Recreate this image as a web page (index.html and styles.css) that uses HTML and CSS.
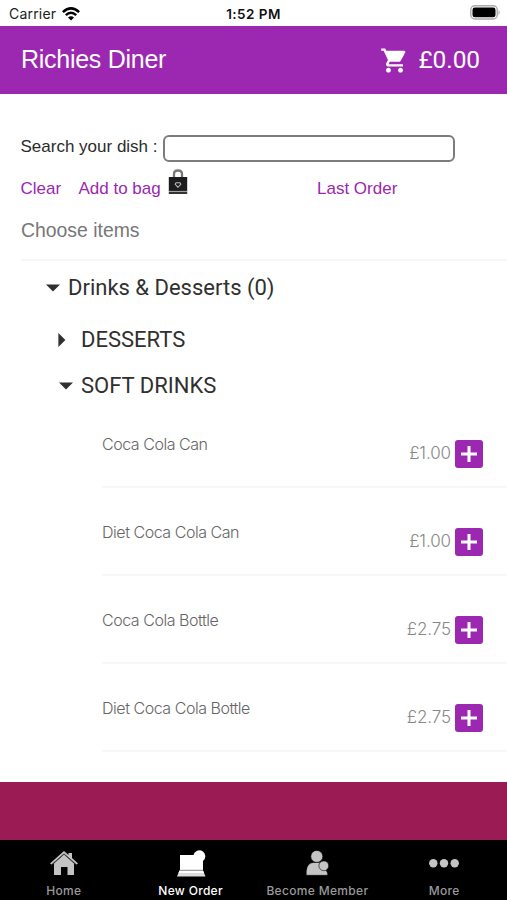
FILE: index.html
```html
<!DOCTYPE html>
<html lang="en">
<head>
<meta charset="utf-8">
<title>Richies Diner</title>
<link rel="stylesheet" href="styles.css">
</head>
<body>
<div class="status">
  <div class="carrier"><span>Carrier</span>
    <svg width="18" height="14" viewBox="0 0 18 14"><g fill="none" stroke="#000" stroke-width="2.5"><path d="M.9 5.1Q9-2.3 17.1 5.1"/><path d="M3.8 8.1Q9 3.3 14.2 8.1"/></g><path d="M6 10.5Q9 7.9 12 10.5L9 13.5Z"/></svg>
  </div>
  <div class="clock">1:52 PM</div>
  <svg class="battery" width="31" height="15" viewBox="0 0 31 15"><rect x=".8" y=".8" width="26.4" height="13.2" rx="4" fill="#fff" stroke="#aaa" stroke-width="1.4"/><rect x="2.5" y="2.5" width="23" height="9.8" rx="2.2"/><path d="M28.5 5Q31 7.5 28.5 10Z" fill="#aaa"/></svg>
</div>
<header class="bar">
  <h1>Richies Diner</h1>
  <div class="cart">
    <svg width="29" height="29" viewBox="0 0 24 24" fill="#fff"><path d="M7 18c-1.1 0-1.99.9-1.99 2S5.9 22 7 22s2-.9 2-2-.9-2-2-2zM1 2v2h2l3.6 7.59-1.35 2.45c-.16.28-.25.61-.25.96 0 1.1.9 2 2 2h12v-2H7.42c-.14 0-.25-.11-.25-.25l.03-.12.9-1.63h7.45c.75 0 1.41-.41 1.75-1.03l3.58-6.49A1 1 0 0 0 20 4H5.21l-.94-2H1zm16 16c-1.1 0-1.99.9-1.99 2s.89 2 1.99 2 2-.9 2-2-.9-2-2-2z"/></svg>
    <span>£0.00</span>
  </div>
</header>
<main>
  <div class="search"><label for="dish">Search your dish :</label><input id="dish" type="text"></div>
  <div class="links">
    <a class="clear">Clear</a><a class="add">Add to bag</a>
    <svg width="20" height="26" viewBox="0 0 20 26"><path d="M6 10V5Q6 1.5 10 1.5T14 5V10" fill="none" stroke="#777" stroke-width="2.3"/><path d="M.8 8H19.2V22.5H.8Z" fill="#1c1c1e"/><path d="M.8 23H19.2V25H.8Z" fill="#333"/><path d="M.8 22.4H19.2" stroke="#aaa" stroke-width=".9"/><path d="M10 18.3L7.2 15.3L8.1 13.8H11.9L12.8 15.3Z" fill="none" stroke="#bbb" stroke-width="1.1"/></svg>
    <a class="last">Last Order</a>
  </div>
  <div class="choose">Choose items</div>
  <div class="group top"><svg width="14" height="8" viewBox="0 0 14 8"><path d="M0 .4H14L7 7.6Z"/></svg><span>Drinks &amp; Desserts (0)</span></div>
  <div class="group shut"><svg width="8" height="14" viewBox="0 0 8 14"><path d="M.4 0V14L7.4 7Z"/></svg><span>DESSERTS</span></div>
  <div class="group open"><svg width="14" height="8" viewBox="0 0 14 8"><path d="M0 .4H14L7 7.6Z"/></svg><span>SOFT DRINKS</span></div>
  <ul>
    <li><span class="name">Coca Cola Can</span><span class="price">£1.00</span><button><svg width="16" height="16"><path d="M8 0V16M0 8H16"/></svg></button></li>
    <li><span class="name">Diet Coca Cola Can</span><span class="price">£1.00</span><button><svg width="16" height="16"><path d="M8 0V16M0 8H16"/></svg></button></li>
    <li><span class="name">Coca Cola Bottle</span><span class="price">£2.75</span><button><svg width="16" height="16"><path d="M8 0V16M0 8H16"/></svg></button></li>
    <li><span class="name">Diet Coca Cola Bottle</span><span class="price">£2.75</span><button><svg width="16" height="16"><path d="M8 0V16M0 8H16"/></svg></button></li>
  </ul>
</main>
<div class="band"></div>
<nav>
  <div class="tab home"><svg width="30" height="28" viewBox="0 0 30 28"><path d="M5 14.5L15 5.5L25 14.5V26H18.5V18H12V26H5Z" fill="#c4c4c4"/><path d="M1 14.5L15 2L19.5 6V4H23V9L29 14.5L27.5 15.5L15 4.5L2.5 15.5Z" fill="#c4c4c4"/><path d="M3.5 15L15 5L26.5 15" fill="none" stroke="#555" stroke-width=".7"/></svg><span>Home</span></div>
  <div class="tab order"><svg width="30" height="28" viewBox="0 0 30 28"><path d="M4 6H17.5A6 6 0 1 1 27 12V21H4Z" fill="#fff"/><path d="M3.5 21.5H27L29.5 27.5H1Z" fill="#ddd"/><path d="M3.5 21.5H27L28 24H2.5Z" fill="#fff"/><path d="M4 21.2H27" stroke="#888" stroke-width=".7"/></svg><span>New Order</span></div>
  <div class="tab member"><svg width="30" height="28" viewBox="0 0 30 28"><g fill="#c4c4c4" stroke="#000" stroke-width=".6"><path d="M4.2 26.3V22Q5 14 11 13.5H19Q24 15 24 21Q27 26 25 26.3Z"/><circle cx="14.8" cy="7.4" r="6"/><circle cx="21.8" cy="16.8" r="4.9"/></g></svg><span>Become Member</span></div>
  <div class="tab more"><svg width="30" height="28" viewBox="0 0 30 28"><g fill="#c4c4c4"><circle cx="4.3" cy="14.3" r="4.2"/><circle cx="15" cy="14.3" r="4.2"/><circle cx="25.7" cy="14.3" r="4.2"/></g></svg><span>More</span></div>
</nav>
</body>
</html>
```
FILE: styles.css
```css
* { box-sizing: border-box; }
body { margin: 0; width: 507px; height: 900px; overflow: hidden; display: flex; flex-direction: column; background: #fff; font-family: "Liberation Sans", sans-serif; color: #2b2b2b; white-space: nowrap; }
svg { display: block; flex: none; }
.status { height: 25.5px; flex: none; display: grid; grid-template-columns: 1fr auto 1fr; align-items: center; padding: 2px 6px 0 9px; font: 14px/20px Inter, sans-serif; color: #222; }
.carrier { display: flex; gap: 6px; align-items: center; letter-spacing: .2px; }
.clock { font-size: 13.5px; font-weight: 600; letter-spacing: .45px; color: #111; margin-left: -3px; }
.battery { justify-self: end; margin-top: -2px; }
.bar { height: 68.5px; flex: none; background: #9c27b0; color: #fff; display: flex; align-items: center; justify-content: space-between; padding: 0 27px 0 21px; }
h1 { margin: 0; font-size: 25px; font-weight: 400; letter-spacing: -.27px; }
.cart { display: flex; align-items: center; gap: 9px; font: 24.5px/30px Roboto, sans-serif; letter-spacing: -.1px; padding-top: 1px; }
main { height: 688px; flex: none; padding-top: 41px; }
.search { display: flex; height: 27px; align-items: center; padding-left: 20.5px; font-size: 17px; }
.search label { width: 142.5px; line-height: 20px; margin-top: -3px; }
.search input { width: 292px; height: 27px; border: 2px solid #7c7c7c; border-radius: 6px; background: #fff; padding: 0 4px; }
.links { display: flex; height: 34px; margin-top: 3px; padding: 5px 0 0 20.5px; font-size: 17px; line-height: 37px; color: #9c27b0; }
.links svg { margin-top: -1px; }
.clear { width: 58px; }
.add { width: 89.5px; }
.last { margin-left: 129px; }
.choose { height: 62px; margin-left: 21px; padding-top: 20px; font-size: 19.4px; line-height: 22px; color: #777; border-bottom: 2px solid #f7f7f7; }
.group { display: flex; align-items: center; font: 22px/46px Roboto, sans-serif; color: #303030; fill: #303030; }
.group svg { margin-right: 8px; }
.top { height: 54px; padding-left: 46px; }
.shut { height: 49px; padding-left: 58px; }
.shut svg { margin-right: 15px; }
.open { height: 44px; padding-left: 59px; }
ul { list-style: none; margin: -8px 0 0 102px; padding: 0; }
li { height: 88px; display: flex; border-bottom: 2px solid #f7f7f7; padding: 40px 24px 0 0; }
.name { flex: 1; font: 300 16px/20px Inter, sans-serif; letter-spacing: -.46px; color: #666; margin-top: -6px; }
.price { font: 300 17px/20px Inter, sans-serif; letter-spacing: -.1px; color: #888; margin: 3px 4px 0 0; }
button { width: 28px; height: 28px; border: 0; border-radius: 3px; padding: 6px; background: #9c27b0; }
button path { stroke: #fff; stroke-width: 3; }
.band { height: 58px; flex: none; background: #9b1c54; }
nav { height: 60px; flex: none; background: #000; display: grid; grid-template-columns: repeat(4, 1fr); font: 500 12px/14px Inter, sans-serif; letter-spacing: .32px; color: #999; }
.tab { display: flex; flex-direction: column; align-items: center; padding: 9px 0 0 1px; gap: 7px; }
.order { color: #fff; }
```
